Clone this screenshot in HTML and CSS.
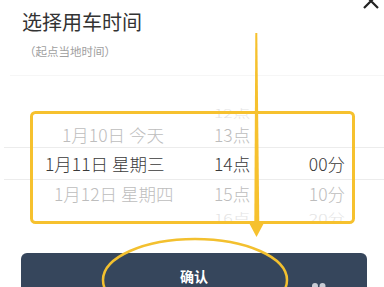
FILE: index.html
```html
<!DOCTYPE html>
<html lang="zh-CN">

<head>
    <meta charset="UTF-8">
    <meta name="viewport" content="width=device-width, initial-scale=1.0">
    <title>选择用车时间</title>

    <link rel="stylesheet" href="styles.css">
</head>

<body>

    <div id="page">

        <div id="head">
            <h1 id="title">选择用车时间</h1>
            <div id="sub">（起点当地时间）</div>
        </div>

        <svg id="close" width="20" height="14" viewBox="0 0 20 14">
            <path d="M3 -6 L17 8 M17 -6 L3 8" stroke="#222" stroke-width="2.2" fill="none" />
        </svg>

        <div id="picker">
            <div class="row far top">
                <span class="date"></span>
                <span class="hour">12点</span>
                <span class="min"></span>
            </div>
            <div class="row near">
                <span class="date d1">1月10日 今天</span>
                <span class="hour">13点</span>
                <span class="min"></span>
            </div>
            <div class="row picked">
                <span class="date d2">1月11日 星期三</span>
                <span class="hour">14点</span>
                <span class="min">00分</span>
            </div>
            <div class="row near">
                <span class="date d3">1月12日 星期四</span>
                <span class="hour">15点</span>
                <span class="min">10分</span>
            </div>
            <div class="row far bottom">
                <span class="date"></span>
                <span class="hour">16点</span>
                <span class="min">20分</span>
            </div>
        </div>

        <div id="footer">
            <button id="bt">确认</button>
        </div>

        <!-- annotation drawn over the screenshot -->
        <svg id="marks" width="384" height="287" viewBox="0 0 384 287">
            <rect x="31.5" y="112.5" width="322" height="110" rx="4" fill="none" stroke="#f6c12e" stroke-width="3" />
            <polygon points="255.3,33 257.3,33 259.3,224 254.3,224" fill="#f6c12e" />
            <polygon points="248,221 265,221 256.5,237" fill="#f6c12e" />
            <ellipse cx="195" cy="280" rx="92" ry="41" fill="none" stroke="#f3c02f" stroke-width="2.5" />
            <circle cx="315" cy="286" r="3" fill="#c9cdd5" />
            <circle cx="322.5" cy="286" r="3" fill="#c9cdd5" />
        </svg>

    </div>

</body>

</html>
```

FILE: styles.css
```css
body {
    margin: 0;
    background-color: #ffffff;
    font-family: "Noto Sans CJK SC", "Noto Sans", sans-serif;
}

#page {
    position: relative;
    width: 384px;
    height: 287px;
    overflow: hidden;
}

#head {
    padding: 10px 0 0 12px;
    margin-left: 10px;
    height: 65px;
    border-bottom: 1px solid #f6f6f6;
}

#title {
    margin: 0;
    font-size: 20px;
    line-height: 24px;
    font-weight: normal;
    color: #333333;
}

#sub {
    margin-top: 9px;
    margin-left: 2px;
    font-size: 11.5px;
    line-height: 16px;
    color: #a0a0a0;
}

#close {
    position: absolute;
    top: 0;
    right: 3px;
}

#picker {
    margin-top: 24px;
    padding-left: 4px;
}

.row {
    display: flex;
    align-items: center;
    font-size: 17.5px;
    font-weight: 300;
    white-space: nowrap;
}

.row .date {
    width: 210px;
    box-sizing: border-box;
}

.row .hour {
    width: 90px;
}

.row .min {
    width: 41px;
    text-align: right;
}

.top {
    height: 21px;
    transform: translateY(3px) scaleY(0.65) !important;
}

.bottom {
    height: 22px;
}

.far {
    color: #e4e4e4;
    transform: scaleY(0.7);
}

.near {
    height: 26px;
    color: #bdbdbd;
}

.picked {
    height: 33px;
    color: #3a3a3a;
    border-top: 1px solid #ececec;
    border-bottom: 1px solid #ececec;
    box-sizing: border-box;
}

.d1 {
    padding-left: 58px;
}

.d2 {
    padding-left: 41px;
}

.d3 {
    padding-left: 50px;
}

#footer {
    margin-top: 25px;
    padding-left: 21px;
}

#bt {
    display: block;
    width: 346px;
    height: 50px;
    border: 0;
    border-radius: 6px;
    padding: 0 0 4px 0;
    background-color: #36465c;
    color: #ffffff;
    font-family: "Noto Sans CJK SC", sans-serif;
    font-size: 14px;
    font-weight: bold;
}

#marks {
    position: absolute;
    left: 0;
    top: 0;
    pointer-events: none;
}
```
